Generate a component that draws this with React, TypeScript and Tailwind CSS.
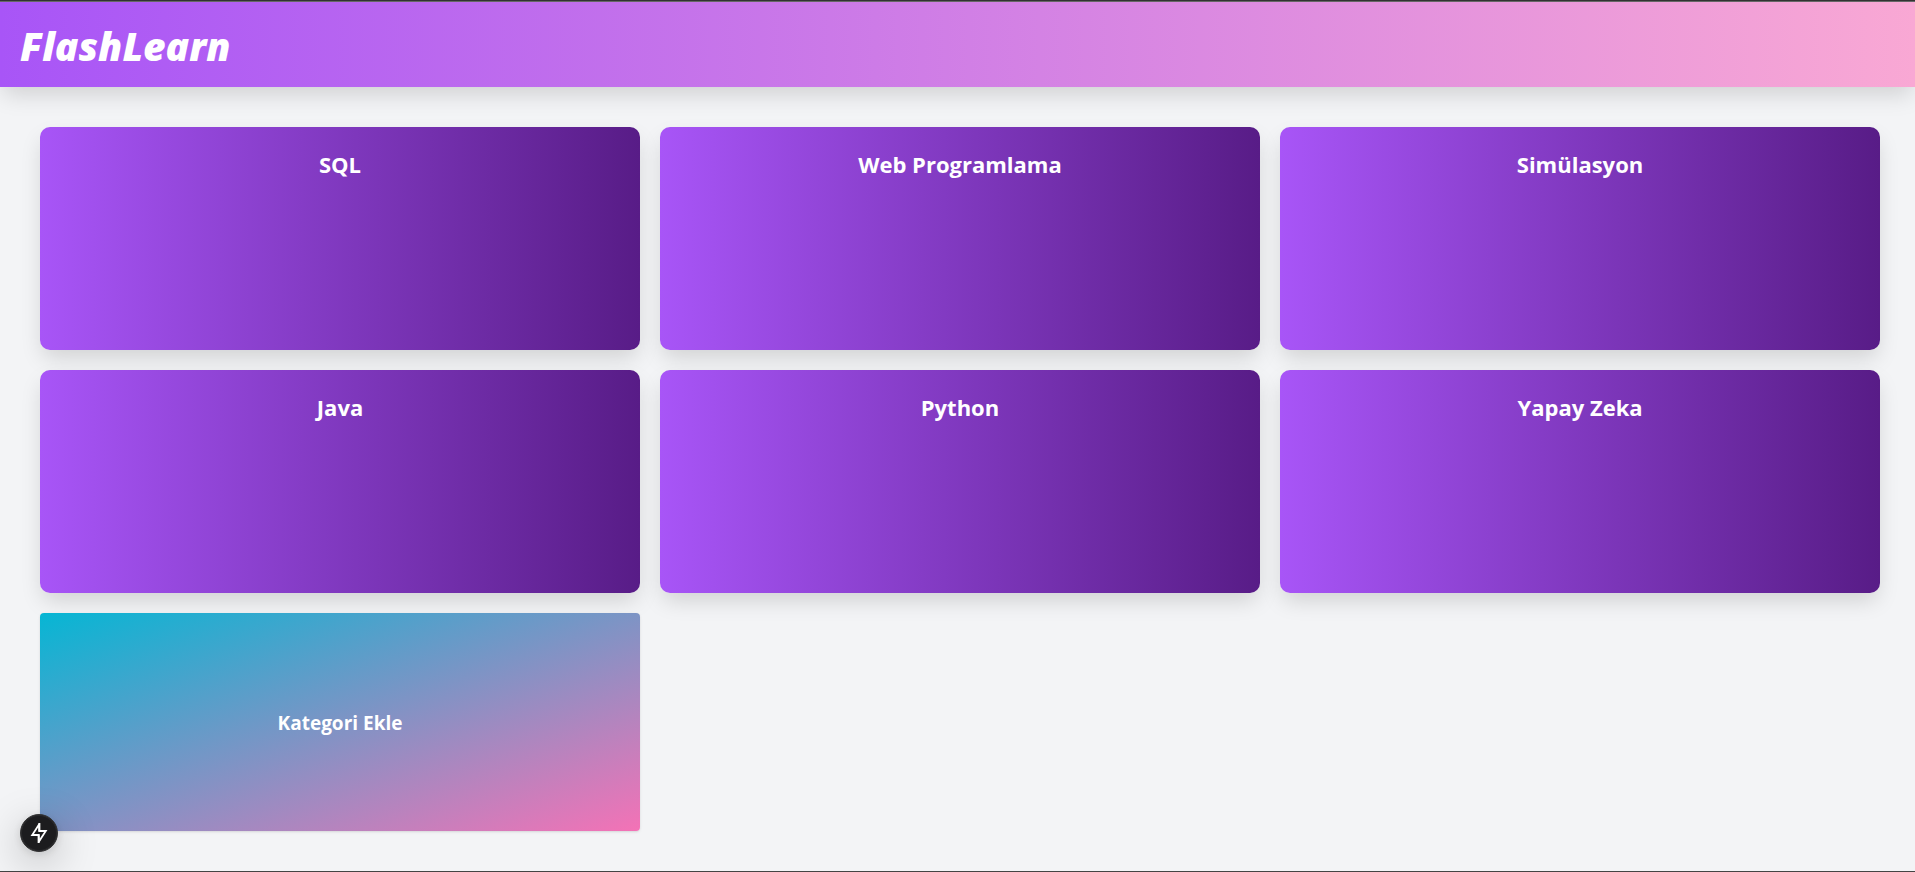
const categories = ["SQL", "Web Programlama", "Simülasyon", "Java", "Python", "Yapay Zeka"];

function Header() {
  return (
    <header className="border-t border-[#666666] bg-[linear-gradient(to_right,#a855f7,#f9a8d4)] p-5 shadow-[0_10px_22px_-3px_rgba(0,0,0,0.15)]">
      <h1 className="pt-0.5 text-[39px] leading-[43px] font-extrabold text-white italic">FlashLearn</h1>
    </header>
  );
}

function CategoryCard({ name }: { name: string }) {
  return (
    <a
      href="#"
      className="block h-[223px] rounded-[10px] bg-[linear-gradient(to_right,#a855f7,#581c87)] p-5 text-center shadow-[0_10px_22px_-3px_rgba(0,0,0,0.15)]"
    >
      <h2 className="text-[22px] leading-[34px] font-bold text-white">{name}</h2>
    </a>
  );
}

function DevIndicator() {
  return (
    <button
      type="button"
      aria-label="Static route"
      className="fixed bottom-5 left-5 flex size-[38px] items-center justify-center rounded-full border border-[#333333] bg-[#1c1c1e] shadow-[0_0_0_1px_#2a2a2c_inset,0_11px_40px_rgba(0,0,0,0.25),0_2px_10px_rgba(0,0,0,0.12)]"
    >
      <svg width="20" height="20" viewBox="0 0 20 20" fill="none" stroke="#fff" strokeWidth="1.8">
        <path d="M10.2 1.2 3.2 12h6.6v6.8L16.8 8h-6.6z" />
        <path d="M10.4 0v8M9.6 12v8" />
      </svg>
    </button>
  );
}

export default function App() {
  return (
    <div className="flex min-h-screen flex-col border-t border-b border-t-[#333333] border-b-[#444444] bg-[#f3f4f6] font-['Open_Sans','Noto_Sans',sans-serif]">
      <Header />
      <main className="grid grid-cols-3 gap-5 py-10 pr-[35px] pl-10">
        {categories.map((name) => (
          <CategoryCard key={name} name={name} />
        ))}
        <button
          type="button"
          className="h-[218px] rounded bg-[linear-gradient(to_bottom_right,#06b6d4,#f472b6)] pt-0.5 text-[19px] font-bold text-white shadow-sm"
        >
          Kategori Ekle
        </button>
      </main>
      <DevIndicator />
    </div>
  );
}
